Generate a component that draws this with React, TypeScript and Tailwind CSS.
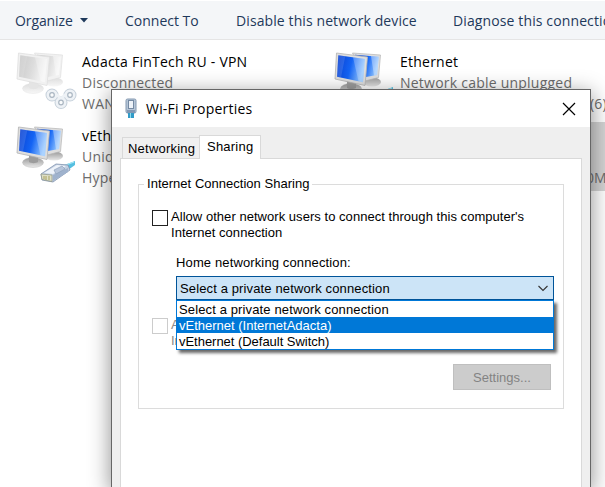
import type { ReactNode } from "react";

const SEGOE = "font-['Open_Sans','Noto_Sans',sans-serif]";
const ARIAL = "font-['Liberation_Sans',Arial,sans-serif]";

function Monitors({ id, off = false, children }: { id: string; off?: boolean; children?: ReactNode }) {
  const screen = off ? ["#c8c8c8", "#dcdcdc", "#f5f5f5"] : ["#0a3fd0", "#1464f4", "#8fc4ff"];
  const frame = off ? "#f1f1f1" : "#dedede";
  const edge = off ? "#e0e0e0" : "#b4b4b4";
  return (
    <svg width="62" height="62" viewBox="0 0 62 62" className="block shrink-0">
      <defs>
        <linearGradient id={id} x1="0" y1="0" x2="1" y2="0.25">
          <stop offset="0" stopColor={screen[0]} />
          <stop offset="0.55" stopColor={screen[1]} />
          <stop offset="1" stopColor={screen[2]} />
        </linearGradient>
        <linearGradient id={id + "-base"} x1="0" y1="0" x2="0" y2="1">
          <stop offset="0" stopColor={off ? "#dddddd" : "#989898"} />
          <stop offset="1" stopColor={off ? "#f7f7f7" : "#e9e9e9"} />
        </linearGradient>
      </defs>
      <ellipse cx="38" cy="31" rx="9" ry="4.500" fill={"url(#" + id + "-base)"} />
      <path d="M18.500 2L46.500 4 44.500 26.500 31 30z" fill={frame} stroke={edge} strokeWidth=".7" />
      <path d="M21 3.800L44.800 5.700 43 24 32 26z" fill={"url(#" + id + ")"} />
      <path d="M37 5.100l7.800.6-1.800 18.300-3 .6z" fill="#fff" opacity=".35" />
      <ellipse cx="17" cy="37.500" rx="10.500" ry="5" fill={"url(#" + id + "-base)"} stroke={edge} strokeWidth=".4" />
      <path d="M13 30h9v7c-2 1.500-7 1.500-9 0z" fill={off ? "#e4e4e4" : "#9c9c9c"} />
      <path d="M2.500 2L33.500 6 31 34.500 1 28z" fill={frame} stroke={edge} strokeWidth=".8" />
      <path d="M4.300 4.300L31 8 29 31.300 3 25.700z" fill={"url(#" + id + ")"} />
      <path d="M19 6.300L31 8 29 31.300 24.500 30.300z" fill="#fff" opacity=".25" />
      <path d="M4.300 4.300l7 1L7 26.500l-4-.8z" fill="#fff" opacity=".12" />
      {children}
    </svg>
  );
}

function Rings() {
  return (
    <g fill="none">
      <g stroke="#c6d0da" strokeWidth="7">
        <circle cx="36" cy="44" r="3" /><circle cx="54" cy="44" r="3" /><circle cx="45" cy="51.500" r="3" />
      </g>
      <g stroke="#eef2f6" strokeWidth="5">
        <circle cx="36" cy="44" r="3" /><circle cx="54" cy="44" r="3" /><circle cx="45" cy="51.500" r="3" />
      </g>
      <path d="M36 44c5-4 6 3 9 3s4-7 9-3" stroke="#eef2f6" strokeWidth="3" />
      <g stroke="#aab6c2" strokeWidth="1.200" fill="#fafbfc">
        <circle cx="36" cy="44" r="2.300" /><circle cx="54" cy="44" r="2.300" /><circle cx="45" cy="51.500" r="2.300" />
      </g>
    </g>
  );
}

function Plug() {
  return (
    <g>
      <path d="M46 41l13-5v4l-7 5-6-1z" fill="#55bfe0" />
      <path d="M47 41l11-4" stroke="#a6e6f5" strokeWidth="1.300" />
      <path d="M25 49l15-10 12 1 2 5-17 12-11-2z" fill="#c3d0e2" stroke="#8093ae" strokeWidth=".8" />
      <path d="M28 48l13-8 9 1-13 8z" fill="#eef3fa" />
      <path d="M37 50l15-7v4L37 56z" fill="#9fb2cd" />
      <path d="M25 49l11 1v6.500l-10-2z" fill="#dedfc6" stroke="#8f9584" strokeWidth=".7" />
      <path d="M28 51v3m2-3v4m3-4v4" stroke="#a29c55" strokeWidth=".9" />
      <path d="M38 45l8-4 3 3-9 5z" fill="#b7c5da" stroke="#8598b4" strokeWidth=".6" />
    </g>
  );
}

function Adapter({ icon, lines }: { icon: ReactNode; lines: ReactNode[] }) {
  return (
    <div className="flex h-[74px] whitespace-nowrap">
      {icon}
      <div className="ml-[4px] text-[14px] leading-[21px] tracking-[0.23px] text-[#6d6d6d]">
        {lines.map((line, i) => (
          <div key={i} className={i === 0 ? "text-black" : ""}>{line}</div>
        ))}
      </div>
    </div>
  );
}

function Dialog() {
  return (
    <div className="absolute top-[89px] left-[111px] flex h-[398px] w-[480px] flex-col border border-b-0 border-[#666] bg-[#efefef] text-black shadow-[0_5px_20px_1px_rgba(0,0,0,0.42)]">
      <div className="flex h-[37px] shrink-0 items-center bg-white">
        <svg width="16" height="22" viewBox="0 0 16 22" className="mt-px ml-[11px]">
          <rect x="3" y="1" width="10" height="14" rx="1.500" fill="#b5c5d7" stroke="#8499b1" />
          <rect x="5.500" y="2.500" width="5" height="8" fill="#edf2f8" stroke="#758aa3" />
          <path d="M4 12h8v3H4z" fill="#8298b3" />
          <path d="M5 15h6v5H5z" fill="#319bc8" />
          <path d="M7.500 15v5" stroke="#91dded" />
        </svg>
        <span className={`${SEGOE} ml-[7px] text-[14px] leading-[22px] tracking-[0.2px]`}>Wi-Fi Properties</span>
        <svg width="14" height="14" viewBox="0 0 14 14" className="mr-[14px] ml-auto">
          <path d="M1 1l12 12M13 1L1 13" stroke="#000" strokeWidth="1.200" />
        </svg>
      </div>
      <div className={`${ARIAL} flex grow flex-col px-[8px] pt-[8px] text-[13px]`}>
        <div className="flex h-[23px] items-end pl-[2px]">
          <div className="h-[21px] w-[77px] border border-r-0 border-b-0 border-[#d9d9d9] bg-[#f0f0f0] pl-[5px] leading-[21px] tracking-[0.22px]">Networking</div>
          <div className="relative -mb-px h-[24px] w-[62px] border border-b-0 border-[#d9d9d9] bg-white pl-[7px] leading-[22px] tracking-[0.22px]">Sharing</div>
        </div>
        <div className="grow border border-b-0 border-[#d9d9d9] bg-white px-[17px] pt-[17px] pr-[15px]">
          <div className="mr-[1px] flex h-[16px] w-[426px] items-center">
            <div className="mt-[1px] h-[8px] w-[6px] self-end border-t border-l border-[#dcdcdc]" />
            <span className="px-[3px] leading-[18px] tracking-[0.02px] whitespace-nowrap">Internet Connection Sharing</span>
            <div className="h-[8px] grow self-end border-t border-r border-[#dcdcdc]" />
          </div>
          <div className="h-[217px] w-[426px] border border-t-0 border-[#dcdcdc] pr-[9px] pl-[13px]">
            <div className="flex items-start pt-[17px]">
              <div className="mt-[1px] h-[16px] w-[16px] shrink-0 border border-[#222]" />
              <div className="ml-[3px] leading-[16px] tracking-[0.04px] whitespace-nowrap">
                <div>Allow other network users to connect through this computer's</div>
                <div>Internet connection</div>
              </div>
            </div>
            <div className="mt-[14px] pl-[24px] leading-[16px] tracking-[0.13px]">Home networking connection:</div>
            <div className="relative mt-[5px] ml-[24px] flex h-[24px] w-[378px] items-center border border-[#005499] bg-[#cce4f7] pl-[3px]">
              <span className="mt-[2px] tracking-[0.13px]">Select a private network connection</span>
              <svg width="10" height="7" viewBox="0 0 10 7" className="mr-[5px] ml-auto"><path d="M.5 1L5 5.500 9.500 1" fill="none" stroke="#333" strokeWidth="1.100" /></svg>
              <div className="absolute top-[23px] left-[-1px] z-10 w-[378px] border border-[#0078d7] bg-white leading-[18px] shadow-[3px_3px_3px_rgba(0,0,0,0.6)]">
                <div className="h-[16px] pl-[2px] tracking-[0.13px]">Select a private network connection</div>
                <div className="h-[16px] bg-[#0078d7] pl-[2px] text-white">vEthernet (InternetAdacta)</div>
                <div className="h-[16px] pl-[2px] tracking-[-0.03px]">vEthernet (Default Switch)</div>
              </div>
            </div>
            <div className="mt-[17px] flex">
              <div className="mt-px h-[16px] w-[16px] shrink-0 border border-[#ccc]" />
              <div className="ml-[3px] leading-[16px] text-[#888]"><div>A</div><div>In</div></div>
            </div>
            <div className="mt-[15px] mr-[3px] ml-auto flex h-[26px] w-[98px] items-center justify-center border border-[#bfbfbf] bg-[#ccc] text-[#838383]"><span className="mt-[2px] tracking-[0px]">Settings...</span></div>
          </div>
        </div>
      </div>
    </div>
  );
}

export default function App() {
  return (
    <main className={`${SEGOE} relative h-[487px] w-[605px] overflow-hidden bg-white`}>
      <nav className="mt-px flex h-[39px] items-center border-b border-[#e5e5e5] bg-[#f4f6f8] pl-[15px] text-[14px] whitespace-nowrap text-[#1e395b]">
        <span className="w-[65px] shrink-0 tracking-[-0.1px]">Organize</span>
        <svg width="8" height="5" viewBox="0 0 8 5" className="shrink-0"><path d="M0 0h8L4 4.500z" fill="#1e395b" /></svg>
        <span className="ml-[37px] w-[111px] shrink-0">Connect To</span>
        <span className="w-[217px] shrink-0 tracking-[0.1px]">Disable this network device</span>
        <span className="shrink-0 tracking-[0.12px]">Diagnose this connection</span>
      </nav>
      <div className="grid grid-cols-[318px_287px] pt-[11px]">
        <div className="pl-[16px]">
          <Adapter icon={<Monitors id="vpn" off><Rings /></Monitors>} lines={["Adacta FinTech RU - VPN", "Disconnected", "WAN Miniport"]} />
          <Adapter icon={<Monitors id="hyper"><Plug /></Monitors>} lines={["vEthernet", "Unidentified", "Hyper-V"]} />
        </div>
        <div className="pl-[16px]">
          <Adapter icon={<Monitors id="eth"><Plug /></Monitors>} lines={["Ethernet", "Network cable unplugged", <div className="pl-[190px]">(6)</div>]} />
          <div className="-mt-[3px] ml-[250px] h-[69px] bg-[#d4d4d4] pt-[45px] pl-[2px] text-[14px] leading-[21px] text-[#6d6d6d]">0M</div>
        </div>
      </div>
      <Dialog />
    </main>
  );
}
